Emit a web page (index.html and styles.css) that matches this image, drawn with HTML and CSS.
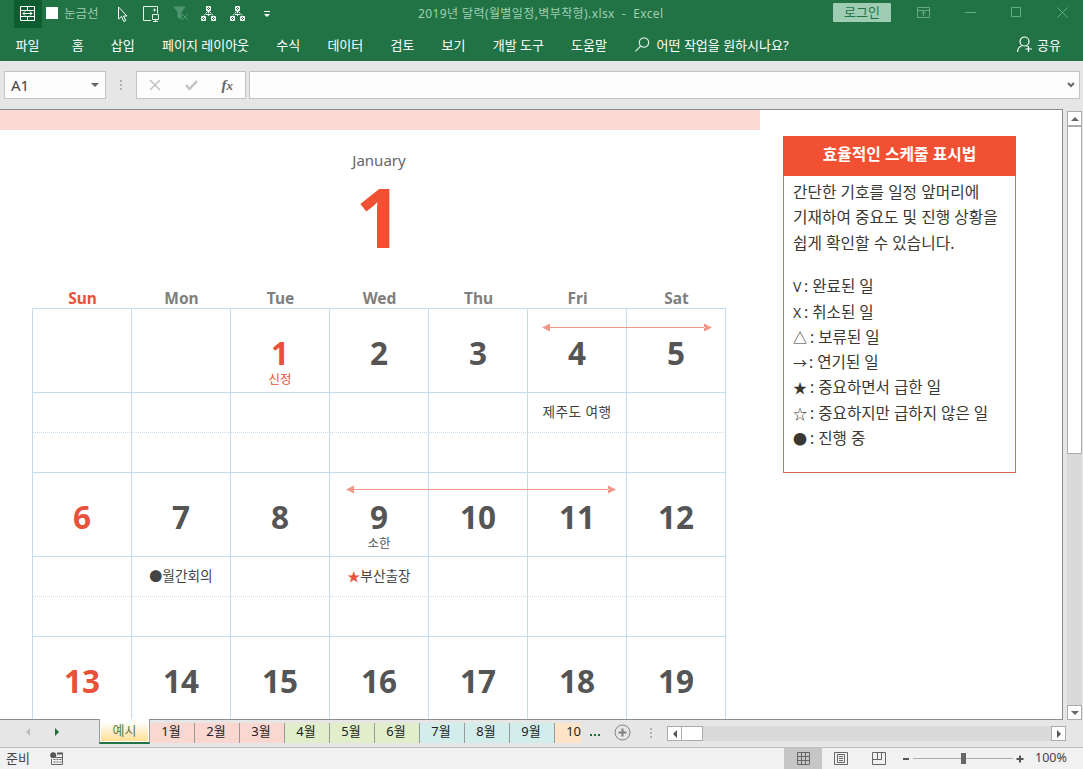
FILE: index.html
```html
<!DOCTYPE html>
<html lang="ko">

<head>
    <meta charset="UTF-8">
    <meta name="viewport" content="width=device-width, initial-scale=1.0">
    <title>2019년 달력(월별일정,벽부착형).xlsx - Excel</title>
    <link rel="stylesheet" href="styles.css">
</head>

<body>
    <div class="app">
        <header class="titlebar">
            <div class="quick">
                <span class="quick-active">
                    <svg width="16" height="16" viewBox="0 0 16 16" fill="none" stroke="#fff"><path d="M.5 .5h14v14H.5zM.5 4.500h14M.5 10.500h14M7.500 .5v4M7.500 10.500v4M3 7.500h9M5 5.500l-2 2 2 2M10 5.500l2 2-2 2" /></svg>
                </span>
                <span class="checkbox"></span>
                <span class="quick-label">눈금선</span>
                <svg class="q-cursor" width="11" height="17" viewBox="0 0 11 17" fill="none" stroke="#fff"><path d="M1.500 1v12l3-2.500 2.300 5 2-1-2.300-4.500h3.500z" /></svg>
                <svg class="q-obj" width="17" height="17" viewBox="0 0 17 17" fill="none" stroke="#e4f1e9"><path d="M8 14.500H.5V.5h14v7M9.500 8.500h6v5h-6zM12.500 13.500v2M10 15.500h5M11.500 2.500v3M10 4h3" /></svg>
                <svg class="q-filter" width="17" height="17" viewBox="0 0 17 17" fill="#4f9570" stroke="#4f9570"><path d="M1 1h11L8 6v7l-3-2V6z" /><path d="M9 8l6 6M15 8l-6 6" fill="none" /></svg>
                <svg class="q-tree" width="16" height="16" viewBox="0 0 16 16" fill="none" stroke="#fff"><path d="M5.500 .5h4v4h-4zM.5 10.500h4v4h-4zM10.500 10.500h4v4h-4zM6 1l3 3M9 1L6 4M1 11l3 3M4 11l-3 3M11 11l3 3M14 11l-3 3" /><path d="M7.500 5v5M6.500 5.500L2.500 10M8.500 5.500l4 4.500M5 8.500h5" stroke-dasharray="2 .8" /></svg>
                <svg class="q-tree" width="16" height="16" viewBox="0 0 16 16" fill="none" stroke="#fff"><path d="M5.500 .5h4v4h-4zM.5 10.500h4v4h-4zM10.500 10.500h4v4h-4zM6 1l3 3M9 1L6 4M1 11l3 3M4 11l-3 3M11 11l3 3M14 11l-3 3" /><path d="M7.500 5v5M6.500 5.500L2.500 10M8.500 5.500l4 4.500M5 8.500h5" stroke-dasharray="2 .8" /></svg>
                <svg class="q-more" width="6" height="7" viewBox="0 0 6 7" fill="#fff"><path d="M0 0h6v1H0zM0 3h6L3 6z" /></svg>
            </div>
            <div class="file-name">2019년 달력(월별일정,벽부착형).xlsx&nbsp; -&nbsp; Excel</div>
            <div class="window-tools">
                <button class="login">로그인</button>
                <svg width="13" height="11" viewBox="0 0 13 11" fill="none" stroke="#68a986"><path d="M.5 .5h12v10H.5zM.5 3.500h12M6.500 9V5M4.500 6.500l2-2 2 2" /></svg>
                <svg width="11" height="11" viewBox="0 0 11 11" stroke="#68a986"><path d="M0 5.500h11" /></svg>
                <svg width="11" height="11" viewBox="0 0 11 11" fill="none" stroke="#68a986"><path d="M.5 .5h9v9h-9z" /></svg>
                <svg width="11" height="11" viewBox="0 0 11 11" stroke="#68a986"><path d="M.5 .5l10 10M10.500 .5l-10 10" /></svg>
            </div>
        </header>

        <nav class="ribbon">
            <span class="tab tab-file">파일</span>
            <span class="tab">홈</span>
            <span class="tab">삽입</span>
            <span class="tab">페이지 레이아웃</span>
            <span class="tab">수식</span>
            <span class="tab">데이터</span>
            <span class="tab">검토</span>
            <span class="tab">보기</span>
            <span class="tab">개발 도구</span>
            <span class="tab">도움말</span>
            <span class="tell-me">
                <svg width="15" height="15" viewBox="0 0 15 15" fill="none" stroke="#d9ebe0" stroke-width="1.200"><circle cx="9" cy="5.500" r="4.700" /><path d="M5.700 9L.5 14.300" /></svg>
                어떤 작업을 원하시나요?
            </span>
            <span class="share">
                <svg width="16" height="17" viewBox="0 0 16 17" fill="none" stroke="#fff" stroke-width="1.200"><circle cx="7.500" cy="5.500" r="4.500" /><path d="M.6 16c0-3 2-5.500 4.500-6.500M9.500 9.800l1 .7M11.500 10v6M8.500 13h6.500" /></svg>
                공유
            </span>
        </nav>

        <div class="formula-bar">
            <div class="name-box">A1<i class="caret"></i></div>
            <div class="dots"><i></i><i></i><i></i></div>
            <div class="fx-box">
                <svg width="12" height="12" viewBox="0 0 12 12" stroke="#c3c3c3" stroke-width="1.600"><path d="M1 1l10 10M11 1L1 11" /></svg>
                <svg width="13" height="12" viewBox="0 0 13 12" fill="none" stroke="#c3c3c3" stroke-width="2.400"><path d="M1 6l3.500 4L12 2" /></svg>
                <span class="fx">f<small>x</small></span>
            </div>
            <div class="formula-input">
                <svg width="8" height="6" viewBox="0 0 8 6" fill="none" stroke="#666" stroke-width="2"><path d="M1 1l3 3 3-3" /></svg>
            </div>
        </div>

        <main class="workspace">
            <div class="sheet">
                <div class="calendar">
                    <div class="band"></div>
                    <div class="month-name">January</div>
                    <div class="month-number">1</div>
                    <div class="weekdays">
                        <span class="red">Sun</span><span>Mon</span><span>Tue</span><span>Wed</span><span>Thu</span><span>Fri</span><span>Sat</span>
                    </div>
                    <div class="grid">
                        <div class="day"></div>
                        <div class="day"></div>
                        <div class="day red">1<small>신정</small></div>
                        <div class="day">2</div>
                        <div class="day">3</div>
                        <div class="day">4</div>
                        <div class="day">5</div>

                        <div class="note"></div>
                        <div class="note"></div>
                        <div class="note"></div>
                        <div class="note"></div>
                        <div class="note"></div>
                        <div class="note wide">제주도 여행</div>
                        <div class="note"></div>

                        <div class="blank"></div>
                        <div class="blank"></div>
                        <div class="blank"></div>
                        <div class="blank"></div>
                        <div class="blank"></div>
                        <div class="blank"></div>
                        <div class="blank"></div>

                        <div class="day red">6</div>
                        <div class="day">7</div>
                        <div class="day">8</div>
                        <div class="day">9<small>소한</small></div>
                        <div class="day">10</div>
                        <div class="day">11</div>
                        <div class="day">12</div>

                        <div class="note"></div>
                        <div class="note"><b class="mark">●</b>월간회의</div>
                        <div class="note"></div>
                        <div class="note"><b class="mark red">★</b>부산출장</div>
                        <div class="note"></div>
                        <div class="note"></div>
                        <div class="note"></div>

                        <div class="blank"></div>
                        <div class="blank"></div>
                        <div class="blank"></div>
                        <div class="blank"></div>
                        <div class="blank"></div>
                        <div class="blank"></div>
                        <div class="blank"></div>

                        <div class="day red">13</div>
                        <div class="day">14</div>
                        <div class="day">15</div>
                        <div class="day">16</div>
                        <div class="day">17</div>
                        <div class="day">18</div>
                        <div class="day">19</div>

                        <svg class="span-arrow trip" width="170" height="9" viewBox="0 0 170 9" fill="#f0978a"><path d="M0 4.500L8 .5v8zM170 4.500l-8-4v8zM7 4h156v1H7z" /></svg>
                        <svg class="span-arrow business" width="270" height="9" viewBox="0 0 270 9" fill="#f0978a"><path d="M0 4.500L8 .5v8zM270 4.500l-8-4v8zM7 4h256v1H7z" /></svg>
                    </div>
                </div>

                <aside class="guide">
                    <h2>효율적인 스케줄 표시법</h2>
                    <div class="guide-body">
                        <p>간단한 기호를 일정 앞머리에<br>기재하여 중요도 및 진행 상황을<br>쉽게 확인할 수 있습니다.</p>
                        <ul>
                            <li><span class="s-letter">V</span>: 완료된 일</li>
                            <li><span class="s-letter">X</span>: 취소된 일</li>
                            <li><span class="s-sign">△</span>: 보류된 일</li>
                            <li><span class="s-sign s-arrow">→</span>: 연기된 일</li>
                            <li><span class="s-sign">★</span>: 중요하면서 급한 일</li>
                            <li><span class="s-sign">☆</span>: 중요하지만 급하지 않은 일</li>
                            <li><span class="s-sign">●</span>: 진행 중</li>
                        </ul>
                    </div>
                </aside>
            </div>
            <div class="vscroll">
                <span class="sb-btn"><svg width="8" height="4" viewBox="0 0 8 4" fill="#666"><path d="M0 4l4-4 4 4z" /></svg></span>
                <span class="v-thumb"></span>
                <span class="v-track"></span>
                <span class="sb-btn"><svg width="8" height="4" viewBox="0 0 8 4" fill="#666"><path d="M0 0l4 4 4-4z" /></svg></span>
            </div>
        </main>

        <div class="sheet-tabs">
            <div class="tab-nav">
                <svg width="4" height="8" viewBox="0 0 4 8" fill="#bdbdbd"><path d="M4 0v8L0 4z" /></svg>
                <svg width="4" height="8" viewBox="0 0 4 8" fill="#1b6b3b"><path d="M0 0v8l4-4z" /></svg>
            </div>
            <div class="sheet-tab active"><span>예시</span></div>
            <div class="sheet-tab pink first">1월</div>
            <div class="sheet-tab pink">2월</div>
            <div class="sheet-tab pink">3월</div>
            <div class="sheet-tab green">4월</div>
            <div class="sheet-tab green">5월</div>
            <div class="sheet-tab green">6월</div>
            <div class="sheet-tab aqua">7월</div>
            <div class="sheet-tab aqua">8월</div>
            <div class="sheet-tab aqua">9월</div>
            <div class="sheet-tab orange">10</div>
            <div class="more-tabs"><i></i><i></i><i></i></div>
            <svg class="add-tab" width="17" height="17" viewBox="0 0 17 17" fill="none" stroke="#808080"><circle cx="8.500" cy="8.500" r="7.500" /><path d="M8.500 4.500v8M4.500 8.500h8" stroke-width="2" /></svg>
            <div class="dots"><i></i><i></i><i></i></div>
            <div class="hscroll">
                <span class="sb-btn"><svg width="4" height="8" viewBox="0 0 4 8" fill="#555"><path d="M4 0v8L0 4z" /></svg></span>
                <span class="h-thumb"></span>
                <span class="h-track"></span>
                <span class="sb-btn"><svg width="4" height="8" viewBox="0 0 4 8" fill="#555"><path d="M0 0v8l4-4z" /></svg></span>
            </div>
        </div>

        <footer class="status">
            <span class="ready">준비</span>
            <svg class="macro" width="14" height="14" viewBox="0 0 14 14"><circle cx="3.200" cy="3.200" r="3" fill="#555" /><path d="M7 1.500h6" stroke="#555" stroke-width="2" /><path d="M1.500 7v5.500h11V1.500M1 5.500h12M3.500 7.500h2M6.500 7.500h2M9.500 7.500h2M3.500 10h2M6.500 10h2M9.500 10h2" fill="none" stroke="#666" /></svg>
            <div class="views">
                <span class="view on"><svg width="13" height="13" viewBox="0 0 13 13" fill="none" stroke="#666"><path d="M.5 .5h12v12H.5zM.5 4.500h12M.5 8.500h12M4.500 .5v12M8.500 .5v12" /></svg></span>
                <span class="view"><svg width="14" height="13" viewBox="0 0 14 13" fill="none" stroke="#666"><path d="M.5 .5h13v12H.5zM3.500 2.500h7v8h-7zM5 4.500h4M5 6.500h4M5 8.500h4" /></svg></span>
                <span class="view"><svg width="14" height="13" viewBox="0 0 14 13" fill="none" stroke="#666"><path d="M.5 .5h13v12H.5zM5.500 .5v7M9.500 .5v7M.5 7.500h9" /></svg></span>
            </div>
            <span class="minus"></span>
            <div class="zoom-line"><i></i></div>
            <svg class="plus" width="8" height="8" viewBox="0 0 8 8" stroke="#555" stroke-width="2"><path d="M4 .5v7M.5 4h7" /></svg>
            <span class="percent">100%</span>
        </footer>
    </div>
</body>

</html>
```
FILE: styles.css
```css
* {
    box-sizing: border-box;
}

body {
    margin: 0;
    font-family: "Noto Sans", "Noto Sans CJK KR", sans-serif;
    font-size: 13px;
    color: #333;
}

svg {
    display: block;
    flex: none;
}

.app {
    display: flex;
    flex-direction: column;
    width: 1083px;
    height: 769px;
    overflow: hidden;
    background: #e6e6e6;
    white-space: nowrap;
}

/* title bar */
.titlebar {
    display: flex;
    height: 28px;
    background: #217346;
    color: #a0cfb3;
    line-height: 26px;
}

.quick {
    display: flex;
    align-items: center;
    width: 418px;
    padding-left: 14px;
}

.quick-active {
    display: flex;
    align-items: center;
    justify-content: center;
    width: 28px;
    height: 28px;
    background: #0f5c31;
}

.checkbox {
    width: 12px;
    height: 12px;
    margin: 0 6px 2px 4px;
    background: #fff;
}

.quick-label {
    width: 53px;
    font-size: 12.5px;
}

.q-obj {
    margin-left: 15px;
}

.q-filter {
    margin-left: 13px;
}

.q-tree {
    margin-left: 13px;
}

.q-filter + .q-tree {
    margin-left: 11px;
}

.q-more {
    margin-left: 18px;
}

.file-name {
    width: 415px;
    font-size: 12px;
    letter-spacing: 0.4px;
    line-height: 27px;
}

.window-tools {
    display: flex;
    flex: 1;
    gap: 35px;
    padding-top: 7px;
}

.login {
    width: 58px;
    height: 19px;
    margin: -4px -9px 0 0;
    padding: 0;
    border: none;
    border-radius: 1px;
    background: #9fcdb3;
    color: #217346;
    font: inherit;
    line-height: 17px;
}

/* ribbon tabs */
.ribbon {
    display: flex;
    height: 33px;
    padding-left: 2px;
    background: #217346;
    color: #fff;
    line-height: 34px;
}

.tab {
    padding: 0 13.6px;
}

.tab-file {
    margin-right: 5px;
}

.tell-me {
    display: flex;
    align-items: center;
    gap: 7px;
    margin-left: 14px;
}

.share {
    display: flex;
    align-items: center;
    gap: 4px;
    margin: 0 22px 0 auto;
}

/* formula bar */
.formula-bar {
    display: flex;
    height: 48px;
    padding: 10px 3px 0 4px;
}

.name-box,
.fx-box,
.formula-input {
    display: flex;
    align-items: center;
    height: 28px;
    border: 1px solid #c3c3c3;
    background: #fdfdfd;
}

.name-box {
    justify-content: space-between;
    width: 102px;
    padding: 0 6px;
    color: #444;
    font-size: 15px;
}

.caret {
    border: 4px solid transparent;
    border-top-color: #666;
    border-bottom: none;
}

.dots {
    display: flex;
    flex-direction: column;
    justify-content: center;
    gap: 2px;
    width: 2px;
    height: 28px;
}

.dots i {
    height: 2px;
    background: #b0b0b0;
}

.name-box + .dots {
    margin: 0 14px;
}

.fx-box {
    justify-content: space-between;
    width: 110px;
    padding: 0 12px;
}

.fx {
    color: #666;
    font: italic bold 15px "Liberation Serif", serif;
}

.fx small {
    font-size: 13px;
}

.formula-input {
    flex: 1;
    justify-content: flex-end;
    margin-left: 3px;
    padding-right: 4px;
}

/* sheet area */
.workspace {
    display: flex;
    height: 611px;
}

.sheet {
    display: flex;
    align-items: flex-start;
    width: 1063px;
    height: 611px;
    overflow: hidden;
    border: solid #8c8c8c;
    border-width: 1px 1px 1px 0;
    background: #fff;
}

.calendar {
    width: 783px;
}

.band {
    width: 760px;
    height: 20px;
    background: #fbdad5;
}

.month-name,
.month-number {
    width: 758px;
    text-align: center;
}

.month-name {
    padding-top: 17px;
    color: #666;
    font-size: 15px;
    line-height: 26px;
}

.month-number {
    height: 112px;
    color: #f15032;
    font-size: 82px;
    font-weight: bold;
    line-height: 86px;
}

.weekdays {
    display: flex;
    width: 693px;
    margin-left: 33px;
    color: #7f7f7f;
    font-size: 15.5px;
    font-weight: bold;
    line-height: 27px;
    text-align: center;
}

.weekdays span {
    width: 99px;
}

.weekdays span.red,
.red {
    color: #e8523a;
}

.grid {
    position: relative;
    display: grid;
    grid-template-columns: repeat(7, 99px);
    grid-template-rows: 84px 40px 40px 84px 40px 40px 84px;
    width: 694px;
    margin: -4px 0 0 32px;
    border: solid #c5dcef;
    border-width: 1px 0 0 1px;
}

.day,
.note,
.blank {
    border: solid #c5dcef;
    border-width: 0 1px 1px 0;
    text-align: center;
}

.day {
    padding-top: 24px;
    color: #555;
    font-size: 31.5px;
    font-weight: bold;
    line-height: 40px;
}

.day.red {
    color: #e8523a;
}

.day small {
    display: block;
    margin-top: 1px;
    font-size: 12.5px;
    font-weight: normal;
    line-height: 12px;
}

.note {
    border-bottom-style: dotted;
    color: #444;
    font-size: 13.7px;
    line-height: 37px;
}

.wide {
    letter-spacing: 0.4px;
}

.mark {
    font-family: "Noto Sans CJK KR", sans-serif;
    font-size: 13px;
    font-weight: normal;
}

.span-arrow {
    position: absolute;
}

.trip {
    top: 14px;
    left: 509px;
}

.business {
    top: 176px;
    left: 313px;
}

/* legend box */
.guide {
    width: 233px;
    height: 337px;
    margin-top: 26px;
    border: 1px solid #d9694f;
    color: #3a3832;
}

.guide h2 {
    height: 40px;
    margin: -1px -1px 0;
    background: #f15032;
    color: #fff;
    font-size: 15.8px;
    line-height: 36px;
    text-align: center;
}

.guide-body {
    padding: 4px 0 0 9px;
    font-size: 15.75px;
    line-height: 25.4px;
}

.guide p,
.guide ul {
    margin: 0;
    padding: 0;
    list-style: none;
}

.guide ul {
    margin-top: 18px;
    font-size: 15.6px;
}

.guide li {
    height: 25.3px;
}

.s-letter,
.s-sign {
    display: inline-block;
    width: 17px;
    font-family: "Noto Sans CJK KR", sans-serif;
    font-size: 14px;
    line-height: 20px;
}

.s-letter {
    width: 11px;
    font-family: "Noto Sans", sans-serif;
}

.s-arrow {
    width: 16px;
}

/* scrollbars */
.sb-btn {
    display: flex;
    flex: none;
    align-items: center;
    justify-content: center;
    width: 15px;
    height: 15px;
    border: 1px solid #ababab;
    background: #fff;
}

.vscroll {
    display: flex;
    flex-direction: column;
    width: 16px;
    padding-top: 2px;
    margin-left: 4px;
}

.v-thumb {
    width: 15px;
    height: 328px;
    border: 1px solid #ababab;
    background: #fff;
}

.v-track,
.h-track {
    flex: 1;
    background: #dadada;
}

.v-track {
    width: 15px;
}

/* sheet tabs */
.sheet-tabs {
    display: flex;
    height: 28px;
    border-bottom: 1px solid #c0c0c0;
}

.tab-nav {
    display: flex;
    gap: 25px;
    width: 99px;
    padding: 8px 0 0 26px;
}

.sheet-tab {
    width: 45px;
    height: 20px;
    margin-top: 3px;
    border-left: 1px solid #999;
    color: #222;
    line-height: 17px;
    text-align: center;
    padding-right: 2px;
}

.sheet-tab.active {
    width: 51px;
    height: 25px;
    margin-top: -1px;
    padding: 3px 1px 1px;
    border: solid #217346;
    border-width: 0 1px 2px;
    border-left-color: #999;
    border-right-color: #999;
    background: #fff;
}

.active span {
    display: block;
    height: 19px;
    background: linear-gradient(#fff, #ffdf94);
    color: #54803f;
    line-height: 17px;
}

.first {
    border-left: none;
    width: 44px;
}

.pink {
    background: #fbd7d2;
}

.green {
    background: #e0eecb;
}

.aqua {
    background: #d3edeb;
}

.orange {
    width: 27px;
    padding: 0;
    background: #fee4c8;
    text-align: right;
}

.more-tabs {
    display: flex;
    gap: 2px;
    padding: 14px 0 0 9px;
}

.more-tabs i {
    width: 2px;
    height: 2px;
    background: #1b6b3b;
}

.add-tab {
    margin: 4px 19px 0 14px;
}

.sheet-tabs .dots {
    height: 26px;
}

.hscroll {
    display: flex;
    width: 399px;
    height: 15px;
    margin: 6px 17px 0 auto;
}

.h-thumb {
    width: 22px;
    margin-left: -1px;
    border: 1px solid #ababab;
    background: #fff;
}

/* status bar */
.status {
    display: flex;
    align-items: center;
    height: 21px;
    background: #f1f1f1;
    color: #444;
}

.ready {
    width: 44px;
    padding-left: 6px;
    line-height: 18px;
    margin-top: -2px;
}

.macro {
    margin-left: 6px;
}

.views {
    display: flex;
    margin-left: auto;
}

.view {
    display: flex;
    align-items: center;
    justify-content: center;
    width: 38px;
    height: 21px;
}

.view.on {
    background: #c6c6c6;
}

.minus {
    width: 6px;
    height: 2px;
    margin-left: 5px;
    background: #555;
}

.zoom-line {
    width: 100px;
    height: 1px;
    margin: 0 3px 0 4px;
    background: #aaa;
}

.zoom-line i {
    display: block;
    width: 5px;
    height: 11px;
    margin: -5px 0 0 48px;
    background: #666;
}

.percent {
    width: 32px;
    margin: -2px 16px 0 11px;
    font-size: 12.5px;
    line-height: 20px;
}
```
